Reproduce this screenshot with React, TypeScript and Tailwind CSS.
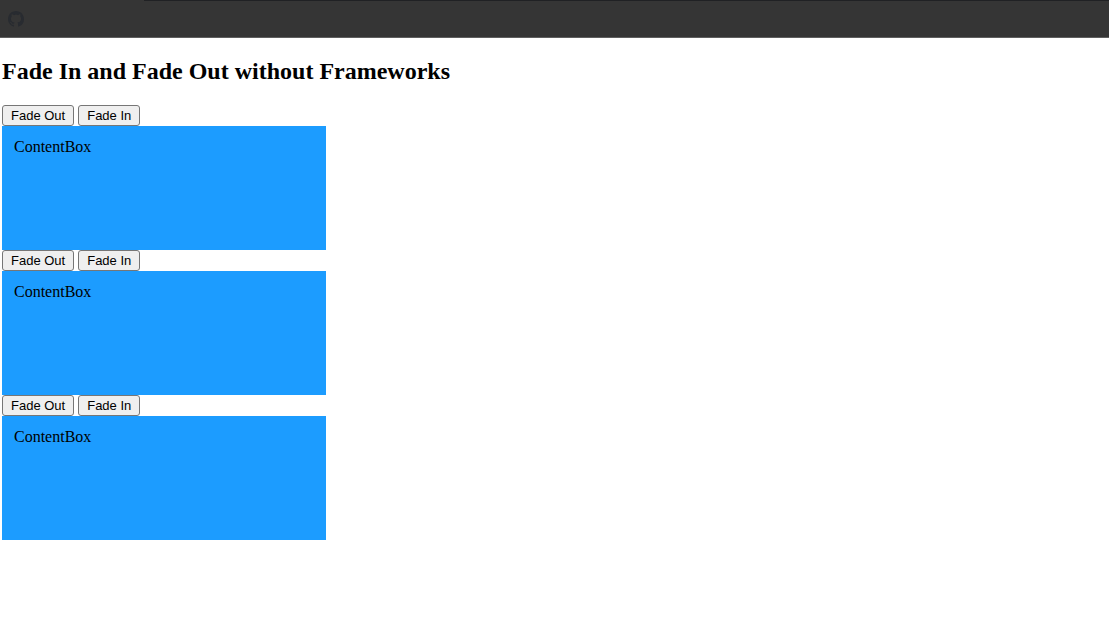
import { useState } from "react";

const boxes = [1, 2, 3];

const buttonClass =
  "h-[21px] rounded-[3px] border border-[#767676] bg-[#efefef] px-2 font-['Liberation_Sans',Arial,sans-serif] text-[13px] leading-[19px] text-black hover:bg-[#e5e5e5] active:bg-[#f5f5f5]";

function GitHubIcon() {
  return (
    <svg viewBox="0 0 16 16" className="size-4" fill="currentColor" aria-hidden="true">
      <path d="M8 0C3.58 0 0 3.58 0 8c0 3.54 2.29 6.53 5.47 7.59.4.07.55-.17.55-.38 0-.19-.01-.82-.01-1.49-2.01.37-2.53-.49-2.69-.94-.09-.23-.48-.94-.82-1.13-.28-.15-.68-.52-.01-.53.63-.01 1.08.58 1.23.82.72 1.21 1.87.87 2.33.66.07-.52.28-.87.51-1.07-1.78-.2-3.64-.89-3.64-3.95 0-.87.31-1.59.82-2.15-.08-.2-.36-1.02.08-2.12 0 0 .67-.21 2.2.82.64-.18 1.32-.27 2-.27s1.36.09 2 .27c1.53-1.04 2.2-.82 2.2-.82.44 1.1.16 1.92.08 2.12.51.56.82 1.27.82 2.15 0 3.07-1.87 3.75-3.65 3.95.29.25.54.73.54 1.48 0 1.07-.01 1.93-.01 2.2 0 .21.15.46.55.38A8.01 8.01 0 0 0 16 8c0-4.42-3.58-8-8-8Z" />
    </svg>
  );
}

function FadeBox() {
  const [visible, setVisible] = useState(true);
  return (
    <section>
      <div className="flex gap-1">
        <button type="button" className={buttonClass} onClick={() => setVisible(false)}>
          Fade Out
        </button>
        <button type="button" className={buttonClass} onClick={() => setVisible(true)}>
          Fade In
        </button>
      </div>
      <div
        className={`min-h-[124px] w-full max-w-[324px] bg-[#1c9cff] p-3 text-base leading-[18px] transition-opacity duration-500 ${
          visible ? "opacity-100" : "opacity-0"
        }`}
      >
        ContentBox
      </div>
    </section>
  );
}

export default function App() {
  return (
    <div className="bg-white font-['Liberation_Serif','Times_New_Roman',serif] text-black">
      <header className="flex flex-col border-b border-[#5f5f5f] bg-[#353535]">
        <div className="ml-36 h-px bg-[#202124]" />
        <div className="flex h-9 items-center px-2">
          <a href="https://github.com" aria-label="GitHub" className="text-[#282b30]">
            <GitHubIcon />
          </a>
        </div>
      </header>
      <main className="px-0.5 pt-5">
        <h2 className="mb-5 text-2xl leading-[27px] font-bold">
          Fade In and Fade Out without Frameworks
        </h2>
        {boxes.map((box) => (
          <FadeBox key={box} />
        ))}
      </main>
    </div>
  );
}
